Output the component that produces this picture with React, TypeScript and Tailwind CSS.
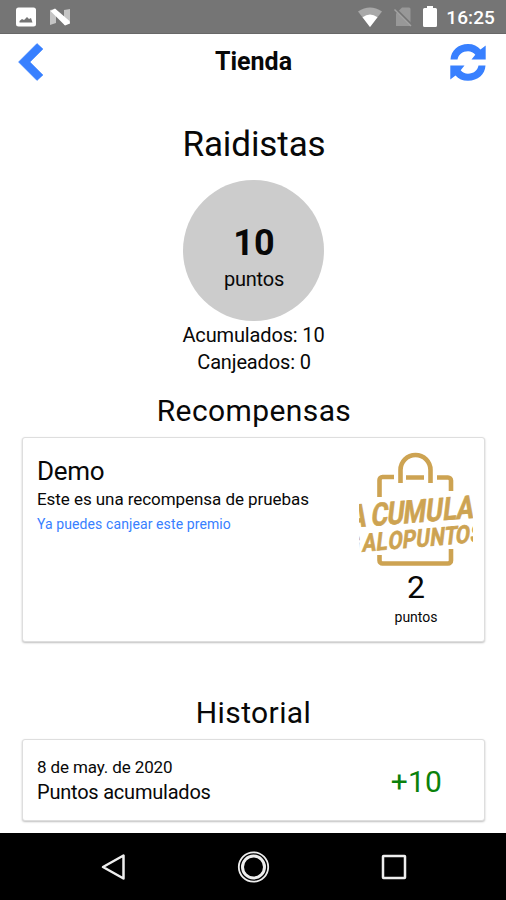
import { ReactNode } from "react";

function BagLogo() {
  return (
    <svg width="114" height="116" viewBox="0 0 114 116" className="block overflow-hidden">
      <g fill="none" stroke="#cda352" strokeWidth="4.6">
        <path d="M41.5 32V19a15 15 0 0 1 30 0V32" />
        <path d="M20.500 46V29a3 3 0 0 1 3-3H35M47 26.500H65M78 26.500H89a3 3 0 0 1 3 3V40" />
        <path d="M20.500 104V109.500a3 3 0 0 0 3 3H89a3 3 0 0 0 3-3V98" />
      </g>
      <g
        fill="#cda352"
        stroke="#cda352"
        strokeWidth="0.7"
        fontFamily="Roboto, sans-serif"
        fontWeight="700"
      >
        <text
          transform="matrix(0.8 -0.064 -0.12 1 0 76)"
          fontSize="32"
          x="-13 14.500 34.500 54.500 82.500 104 121"
        >
          ACUMULA
        </text>
        <text
          transform="matrix(0.82 -0.07 -0.12 1 0 101)"
          fontSize="25"
          x="-17 3.500 20.500 35 52.500 69 86 103.500 117 135"
        >
          GALOPUNTOS
        </text>
      </g>
    </svg>
  );
}

function StatusBar() {
  return (
    <div className="flex h-[34px] shrink-0 items-center border-b border-[#686868] bg-[#757575] pl-4 pr-[11px]">
      <svg width="20" height="20" viewBox="0 0 20 20">
        <rect x="0" y="0.500" width="20" height="19" rx="2.500" fill="#fff" />
        <path d="M3.500 15.500V14l2.500-2 2 1 3-3 2 2 2-1 1.500 4.500z" fill="#757575" />
      </svg>
      <svg width="21" height="18" viewBox="0 0 21 18" className="ml-3.5">
        <path d="M0 2l6-1v14l-6 2zM14 2l6-1v14l-6 2z" fill="#c4c4c4" />
        <path d="M0.500 3L5 0.500 19.500 13 20 15.500 15 17.500z" fill="#fff" />
      </svg>
      <div className="flex-1" />
      <svg width="24" height="20" viewBox="0 0 24 20" className="-translate-x-[2px]">
        <path d="M0 4.500Q12-3.500 24 4.500L12 20z" fill="#a8a8a8" />
        <path d="M4.500 10.300Q12 4.500 19.500 10.300L12 20z" fill="#fff" />
      </svg>
      <svg width="20" height="20" viewBox="0 0 20 20" className="ml-[10px]">
        <path d="M8 0.500H15a1.500 1.500 0 0 1 1.500 1.500V19H2V6.500z" fill="#989898" />
        <path d="M1 1.500L18.500 19" stroke="#757575" strokeWidth="2.500" />
        <path d="M0.500 2.500L17 19" stroke="#a3a3a3" strokeWidth="1.500" />
      </svg>
      <svg width="14" height="21" viewBox="0 0 14 21" className="ml-[9px]">
        <path d="M4 0H10V2H12.500A1.500 1.500 0 0 1 14 3.500V19.500A1.500 1.500 0 0 1 12.500 21H1.500A1.500 1.500 0 0 1 0 19.500V3.500A1.500 1.500 0 0 1 1.500 2H4z" fill="#fff" />
      </svg>
      <span className="ml-[9px] pt-[2px] text-[19px] leading-none font-medium tracking-[0.1px] text-white">
        16:25
      </span>
    </div>
  );
}

function Card({ className, children }: { className: string; children: ReactNode }) {
  return (
    <div
      className={`ml-[22px] mr-[21px] flex justify-between rounded-[3px] border border-[#dedede] bg-white pl-[14px] shadow-[0_1px_2px_rgba(0,0,0,0.25)] ${className}`}
    >
      {children}
    </div>
  );
}

export default function App() {
  return (
    <div className="flex h-[900px] w-[506px] flex-col overflow-hidden bg-white font-[Roboto,sans-serif] text-[#080808]">
      <StatusBar />

      <header className="grid h-[56px] shrink-0 grid-cols-[1fr_auto_1fr] items-center pl-[18px] pr-[20px]">
        <svg width="26" height="38" viewBox="0 0 26 38" fill="#3880ff">
          <path d="M19 0.500L25 6 12 19 25 32 19 37.500 0.500 19z" strokeLinejoin="round" stroke="#3880ff" strokeWidth="0.500" />
        </svg>
        <h1 className="pb-[2px] pl-[3px] text-[25px] leading-none font-bold">Tienda</h1>
        <svg width="36" height="38" viewBox="0 0 36 38" fill="#3880ff" className="justify-self-end">
          <path d="M0.500 16.500C1 7.500 8 1 18 1C23.500 1 27.500 3 30.500 6.500L35.700 2.500V16.500H21.500L25.300 11.800C23.500 9.500 21 8.300 18 8.300C12.500 8.300 8.500 11.500 7.500 16.500z" />
          <path d="M35.500 22.500C35 31.500 28 37.700 18 37.700C12.500 37.700 8.500 36 5.500 32.500L0.300 36.500V22.500H14.500L10.700 27.200C12.500 29.500 15 30.700 18 30.700C23.500 30.700 27.500 27.500 28.500 22.500z" />
        </svg>
      </header>

      <main className="flex min-h-0 flex-1 flex-col">
        <section className="flex flex-col items-center pt-[34px]">
          <h2 className="pl-[2px] text-[35px] leading-[42px] tracking-[-0.1px]">Raidistas</h2>
          <div className="mt-[14px] flex h-[141px] w-[141px] flex-col items-center rounded-full bg-[#cccccc] pt-[42px]">
            <span className="pl-[2px] text-[36px] leading-[42px] font-bold">10</span>
            <span className="mt-[3px] pl-[2px] text-[20px] leading-[24px] tracking-[-0.2px]">puntos</span>
          </div>
          <p className="mt-[1px] pl-[1px] text-[20px] leading-[27px] tracking-[-0.15px]">Acumulados: 10</p>
          <p className="pl-[2px] text-[20px] leading-[27px] tracking-[-0.15px]">Canjeados: 0</p>
        </section>

        <h2 className="mt-[17px] pl-[2px] text-center text-[30px] leading-[36px] tracking-[0.4px]">Recompensas</h2>
        <Card className="mt-[8px] h-[205px] pr-[11px]">
          <div className="pt-[17px]">
            <h3 className="text-[26px] leading-[32px] tracking-[-0.3px]">Demo</h3>
            <p className="text-[17px] leading-[24px] tracking-[-0.06px]">Este es una recompensa de pruebas</p>
            <p className="mt-[1px] text-[14px] leading-[24px] tracking-[0.1px] text-[#3880ff]">
              Ya puedes canjear este premio
            </p>
          </div>
          <div className="flex flex-col items-center pt-[13px]">
            <BagLogo />
            <span className="mt-[1px] text-[32px] leading-[38px]">2</span>
            <span className="mt-[1px] text-[14px] leading-[20px]">puntos</span>
          </div>
        </Card>

        <h2 className="mt-[53px] pl-[1px] text-center text-[30px] leading-[36px] tracking-[0.4px]">Historial</h2>
        <Card className="mt-[8px] h-[82px] pr-[42px]">
          <div className="pt-[15px]">
            <p className="text-[17px] leading-[24px] tracking-[-0.12px]">8 de may. de 2020</p>
            <p className="text-[20px] leading-[26px] tracking-[-0.22px]">Puntos acumulados</p>
          </div>
          <span className="self-center pt-[3px] text-[30px] leading-[36px] tracking-[0.2px] text-[#0b810b]">
            +10
          </span>
        </Card>
      </main>

      <nav className="flex h-[67px] shrink-0 items-center justify-between bg-black pl-[100px] pr-[98px]">
        <svg width="28" height="30" viewBox="0 0 28 30" fill="none" stroke="#eee" strokeWidth="2.500">
          <path d="M23.500 3.500V26.500L3 15z" strokeLinejoin="round" />
        </svg>
        <svg width="34" height="34" viewBox="0 0 34 34" fill="none" stroke="#eee">
          <circle cx="16.500" cy="17" r="14.700" strokeWidth="1.800" />
          <circle cx="16.500" cy="17" r="11" strokeWidth="3" />
        </svg>
        <svg width="28" height="28" viewBox="0 0 28 28" fill="none" stroke="#eee" strokeWidth="2.500">
          <rect x="3" y="3" width="22" height="22" rx="0.500" />
        </svg>
      </nav>
    </div>
  );
}
